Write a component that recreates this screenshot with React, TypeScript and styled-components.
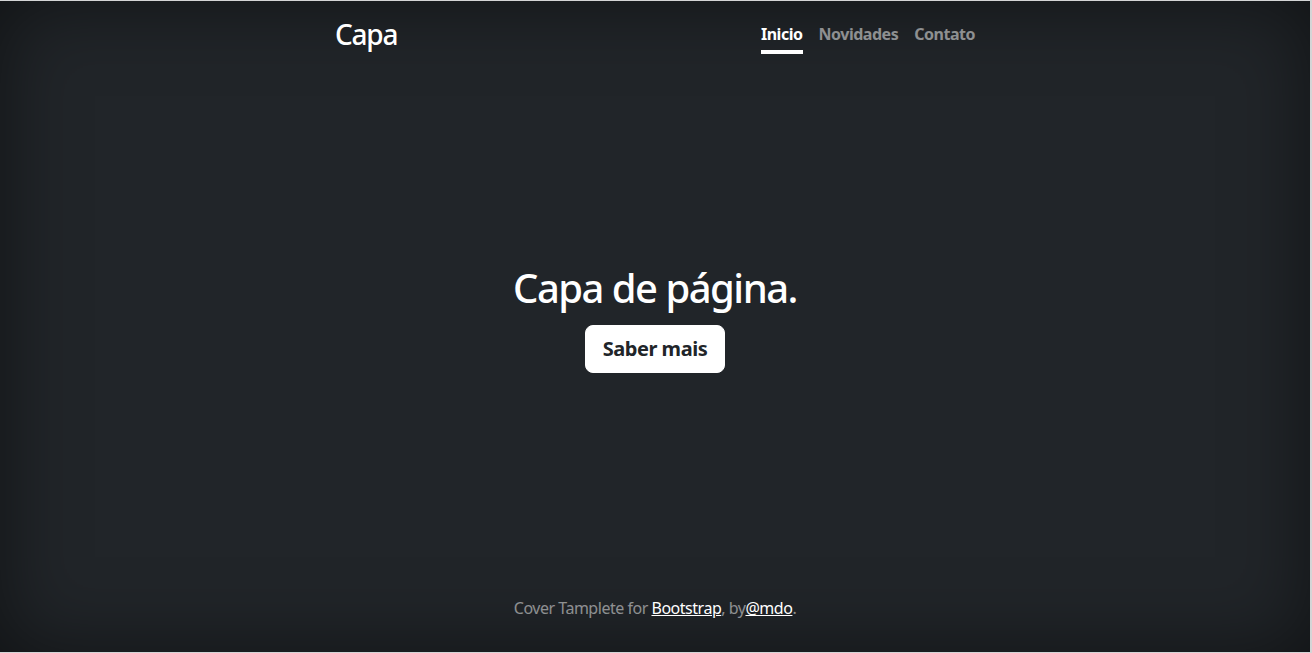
import React from "react";
import styled, { createGlobalStyle } from "styled-components";

const GlobalStyle = createGlobalStyle`
  html, body {
    margin: 0;
    padding: 0;
    height: 100%;
    background: #212529;
  }
  body {
    font-family: "Noto Sans", "Segoe UI", Arial, sans-serif;
    font-size: 16px;
    line-height: 1.5;
    letter-spacing: -0.03em;
    color: #fff;
  }
  * { box-sizing: border-box; }
`;

const Frame = styled.div`
  width: 1312px;
  height: 653px;
  display: flex;
  background: #212529;
  box-shadow: inset 0 0 5rem rgba(0, 0, 0, 0.5);
  border-top: 1px solid #d4d5d6;
  border-right: 2px solid #d4d5d6;
  border-bottom: 1px solid #d4d5d6;
  text-align: center;
`;

const Cover = styled.div`
  display: flex;
  flex-direction: column;
  width: 100%;
  max-width: 672px;
  margin: 0 auto;
  padding: 17px 16px 16px;
`;

const Header = styled.header`
  display: flex;
  justify-content: space-between;
  align-items: flex-start;
  margin-bottom: auto;
`;

const Brand = styled.h3`
  margin: 0;
  font-size: 28px;
  font-weight: 500;
  line-height: 1.2;
  letter-spacing: -0.045em;
  color: #fff;
`;

const Nav = styled.nav`
  display: flex;
  gap: 16px;
`;

const NavLink = styled.a<{ $active?: boolean }>`
  display: block;
  padding: 4px 0;
  font-weight: 700;
  font-size: 16px;
  line-height: 24px;
  color: ${(p) => (p.$active ? "#fff" : "rgba(255,255,255,0.5)")};
  border-bottom: 4px solid ${(p) => (p.$active ? "#fff" : "transparent")};
  text-decoration: none;
  cursor: pointer;
`;

const Main = styled.main`
  display: flex;
  flex-direction: column;
  align-items: center;
  padding: 0 16px 14px;
`;

const Title = styled.h1`
  margin: 0 0 13px;
  font-size: 40px;
  font-weight: 500;
  line-height: 48px;
  letter-spacing: -0.038em;
  color: #fff;
`;

const Button = styled.a`
  display: inline-block;
  padding: 8px 17px;
  font-size: 20px;
  font-weight: 700;
  line-height: 30px;
  color: #212529;
  background: #fff;
  border: 1px solid #fff;
  border-radius: 8px;
  text-decoration: none;
  cursor: pointer;
`;

const Footer = styled.footer`
  margin-top: auto;
  color: rgba(255, 255, 255, 0.5);
`;

const FooterText = styled.p`
  margin: 0 0 16px;
  font-size: 16px;
  line-height: 24px;
`;

const FooterLink = styled.a`
  color: #fff;
  text-decoration: underline;
`;

export default function App() {
  return (
    <>
      <GlobalStyle />
      <Frame>
        <Cover>
          <Header>
            <Brand>Capa</Brand>
            <Nav>
              <NavLink $active>Inicio</NavLink>
              <NavLink>Novidades</NavLink>
              <NavLink>Contato</NavLink>
            </Nav>
          </Header>
          <Main>
            <Title>Capa de página.</Title>
            <Button>Saber mais</Button>
          </Main>
          <Footer>
            <FooterText>
              Cover Tamplete for <FooterLink>Bootstrap</FooterLink>, by<FooterLink>@mdo</FooterLink>.
            </FooterText>
          </Footer>
        </Cover>
      </Frame>
    </>
  );
}
